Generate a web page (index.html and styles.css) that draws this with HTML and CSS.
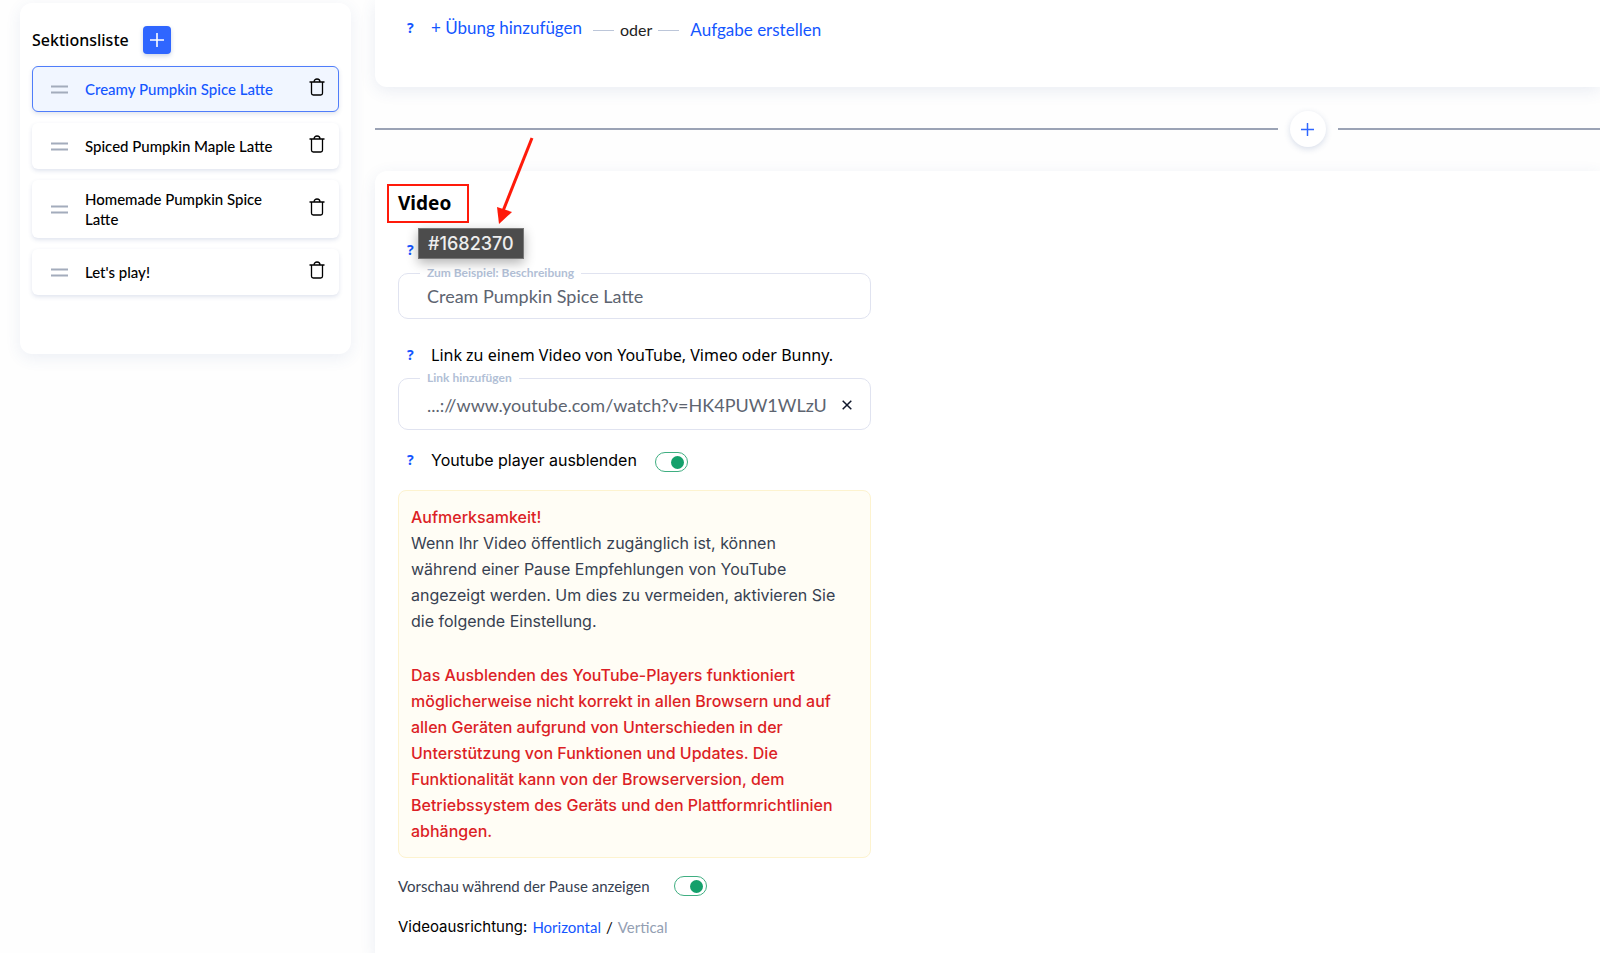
FILE: index.html
```html
<!DOCTYPE html>
<html lang="de">
<head>
  <meta charset="UTF-8" />
  <meta name="viewport" content="width=device-width, initial-scale=1.0"/>
  <title>Sektionsliste</title>
  <link rel="stylesheet" href="styles.css">
</head>
<body>
  <!-- Shared icons -->
  <svg class="sprite" aria-hidden="true">
    <symbol id="trash" viewBox="0 0 16 18">
      <path d="M.5 4h15M2.500 4v11.200a1.800 1.800 0 0 0 1.800 1.800h7.400a1.800 1.800 0 0 0 1.800-1.800V4M5 4c0-4 6-4 6 0" fill="none" stroke="currentColor" stroke-width="1.300"/>
    </symbol>
    <symbol id="drag" viewBox="0 0 17 9">
      <path d="M0 1.500h17M0 7.500h17" stroke="currentColor" stroke-width="2"/>
    </symbol>
    <symbol id="plus" viewBox="0 0 14 14">
      <path d="M7 .5v13M.5 7h13" fill="none" stroke="currentColor" stroke-width="1.600" stroke-linecap="round"/>
    </symbol>
  </svg>

  <div class="page">
    <aside class="sidebar">
      <div class="sidebar-head">
        <h2>Sektionsliste</h2>
        <button class="add-btn" aria-label="Sektion hinzufügen"><svg><use href="#plus"/></svg></button>
      </div>
      <ul class="sections">
        <li class="item active">
          <svg class="drag"><use href="#drag"/></svg>
          <a href="#">Creamy Pumpkin Spice Latte</a>
          <button class="trash" aria-label="Löschen"><svg><use href="#trash"/></svg></button>
        </li>
        <li class="item">
          <svg class="drag"><use href="#drag"/></svg>
          <a href="#">Spiced Pumpkin Maple Latte</a>
          <button class="trash" aria-label="Löschen"><svg><use href="#trash"/></svg></button>
        </li>
        <li class="item">
          <svg class="drag"><use href="#drag"/></svg>
          <a href="#">Homemade Pumpkin Spice Latte</a>
          <button class="trash" aria-label="Löschen"><svg><use href="#trash"/></svg></button>
        </li>
        <li class="item">
          <svg class="drag"><use href="#drag"/></svg>
          <a href="#">Let's play!</a>
          <button class="trash" aria-label="Löschen"><svg><use href="#trash"/></svg></button>
        </li>
      </ul>
    </aside>

    <main class="content">
      <section class="card card-top">
        <div class="lead">
          <button class="help">?</button>
          <a href="#">+ Übung hinzufügen</a>
        </div>
        <span class="or">oder</span>
        <a href="#">Aufgabe erstellen</a>
      </section>

      <div class="divider">
        <button class="round-add" aria-label="Block hinzufügen"><svg><use href="#plus"/></svg></button>
      </div>

      <section class="card card-video">
        <h1>Video</h1>

        <div class="row">
          <button class="help">?</button>
        </div>
        <fieldset class="field">
          <legend><label for="desc">Zum Beispiel: Beschreibung</label></legend>
          <input id="desc" type="text" value="Cream Pumpkin Spice Latte">
        </fieldset>

        <div class="row row-link">
          <button class="help">?</button>
          <span class="row-title">Link zu einem Video von YouTube, Vimeo oder Bunny.</span>
        </div>
        <fieldset class="field field-link">
          <legend><label for="link">Link hinzufügen</label></legend>
          <input id="link" type="text" value="...://www.youtube.com/watch?v=HK4PUW1WLzU">
          <button class="clear" aria-label="Leeren">
            <svg viewBox="0 0 10 10"><path d="M.7.7l8.600 8.600M9.300.7L.7 9.300" stroke="currentColor" stroke-width="1.500"/></svg>
          </button>
        </fieldset>

        <div class="row row-player">
          <button class="help">?</button>
          <label for="hide">Youtube player ausblenden</label>
          <input id="hide" class="switch" type="checkbox" checked>
        </div>

        <div class="notice">
          <strong>Aufmerksamkeit!</strong>
          <p>Wenn Ihr Video öffentlich zugänglich ist, können während einer Pause Empfehlungen von YouTube angezeigt werden. Um dies zu vermeiden, aktivieren Sie die folgende Einstellung.</p>
          <strong>Das Ausblenden des YouTube-Players funktioniert möglicherweise nicht korrekt in allen Browsern und auf allen Geräten aufgrund von Unterschieden in der Unterstützung von Funktionen und Updates. Die Funktionalität kann von der Browserversion, dem Betriebssystem des Geräts und den Plattformrichtlinien abhängen.</strong>
        </div>

        <div class="preview">
          <label for="preview">Vorschau während der Pause anzeigen</label>
          <input id="preview" class="switch" type="checkbox" checked>
        </div>

        <div class="orientation">
          <span class="orientation-title">Videoausrichtung:</span>
          <a href="#">Horizontal</a>
          <span>/</span>
          <a href="#" class="muted">Vertical</a>
        </div>

        <!-- Marker, arrow and id tooltip over the heading -->
        <div class="marker"></div>
        <svg class="arrow" viewBox="0 0 50 92">
          <path d="M44 3L15 76" stroke="#ff1a0a" stroke-width="3"/>
          <path d="M9 72l15 5L11 89z" fill="#ff1a0a"/>
        </svg>
        <div class="tooltip">#1682370</div>
      </section>
    </main>
  </div>
</body>
</html>
```
FILE: styles.css
```css
* {
  margin: 0;
  padding: 0;
  box-sizing: border-box;
}

body {
  background: #fefefe;
  color: #000;
  font-family: Lato, sans-serif;
  font-size: 16px;
  overflow: hidden;
}

button {
  border: 0;
  background: none;
  cursor: pointer;
}

a {
  color: #1456ff;
  text-decoration: none;
}

.sprite {
  display: none;
}

.page {
  display: flex;
  align-items: flex-start;
  gap: 24px;
  padding-left: 20px;
  height: 100vh;
}

/* Sidebar */
.sidebar {
  flex: 0 0 331px;
  margin-top: 3px;
  padding: 23px 12px 59px;
  border-radius: 12px;
  background: #fff;
  box-shadow: 0 4px 16px rgba(60, 90, 150, 0.09);
}

.sidebar-head {
  display: flex;
  align-items: center;
  gap: 14px;
  margin-bottom: 12px;
}

.sidebar-head h2 {
  font: 500 16px/28px "Noto Sans", sans-serif;
}

.add-btn {
  display: flex;
  align-items: center;
  justify-content: center;
  width: 28px;
  height: 28px;
  border-radius: 4px;
  background: #2f66ff;
  color: #fff;
  box-shadow: 0 2px 4px rgba(60, 90, 150, 0.25);
}

.add-btn svg {
  width: 14px;
  height: 14px;
}

.sections {
  display: flex;
  flex-direction: column;
  gap: 11px;
  list-style: none;
}

.item {
  display: flex;
  align-items: center;
  gap: 17px;
  min-height: 46px;
  padding: 8px 13px 8px 18px;
  border: 1px solid transparent;
  border-radius: 6px;
  background: #fff;
  box-shadow: 0 2px 4px rgba(60, 90, 150, 0.16);
}

.item a {
  flex: 1;
  color: #000;
  font-size: 15px;
  font-weight: 500;
  line-height: 20px;
}

.item.active {
  border-color: #4f7dfa;
  background: #f1f6ff;
}

.item.active a {
  color: #1456ff;
}

.drag {
  width: 17px;
  height: 9px;
  color: #a3acbc;
}

.trash {
  height: 18px;
  margin-bottom: 4px;
}

.trash svg {
  display: block;
  width: 16px;
  height: 18px;
}

/* Content */
.content {
  display: flex;
  flex: 1;
  flex-direction: column;
  min-width: 0;
  height: 100%;
}

.card {
  background: #fff;
  box-shadow: 0 4px 16px rgba(60, 90, 150, 0.1);
}

.card-top {
  display: flex;
  align-items: center;
  padding: 16px 24px 43px 32px;
  border-bottom-left-radius: 12px;
  font-size: 17px;
  line-height: 24px;
}

.lead {
  display: flex;
  padding-bottom: 4px;
}

.help {
  width: 24px;
  color: #1456ff;
  font: 700 14px/24px "Noto Sans", sans-serif;
  text-align: left;
}

.or {
  display: flex;
  align-items: center;
  gap: 6px;
  margin: 0 11px;
  color: #222;
  font-size: 16px;
}

.or::before,
.or::after {
  content: '';
  width: 21px;
  height: 1px;
  background: #bcc6d9;
}

.divider {
  display: flex;
  align-items: center;
  gap: 12px;
  padding: 24px 0;
}

.divider::before,
.divider::after {
  content: '';
  flex: 31;
  height: 2px;
  background: #9ba3b5;
}

.divider::after {
  flex: 9;
}

.round-add {
  display: flex;
  align-items: center;
  justify-content: center;
  width: 36px;
  height: 36px;
  border-radius: 50%;
  background: #fff;
  color: #2f66ff;
  box-shadow: 0 2px 6px rgba(60, 90, 150, 0.2);
}

.round-add svg {
  width: 13px;
  height: 13px;
  stroke-width: 2px;
}

.card-video {
  position: relative;
  flex: 1;
  padding: 18px 23px;
  border-top-left-radius: 12px;
}

.card-video h1 {
  margin-bottom: 21px;
  font: 700 19px/28px "Noto Sans", sans-serif;
}

.row {
  display: flex;
  align-items: center;
  height: 24px;
  padding-left: 9px;
}

.row-link {
  margin-top: 24px;
}

.row-title {
  font: 16px/24px "Noto Sans", sans-serif;
}

.row-player {
  margin-top: 18px;
  font-family: Inter, sans-serif;
}

.row-player .switch {
  margin: 4px 0 0 18px;
}

.field {
  display: flex;
  align-items: center;
  max-width: 473px;
  margin-top: 4px;
  padding: 0 16px 0 21px;
  border: 1px solid #e0e3f0;
  border-radius: 10px;
}

.field legend {
  padding: 0 7px;
  color: #b2bfd6;
  font-size: 12px;
  font-weight: 700;
  line-height: 14px;
}

.field input {
  flex: 1;
  min-width: 0;
  height: 38px;
  padding-left: 7px;
  padding-bottom: 6px;
  border: 0;
  background: none;
  color: #5d6470;
  font: 18px Lato, sans-serif;
}

.field-link input {
  height: 44px;
  padding-bottom: 4px;
}

.clear {
  padding: 0 2px 4px;
  color: #10182c;
}

.clear svg {
  display: block;
  width: 10px;
  height: 10px;
}

/* Switch */
.switch {
  appearance: none;
  display: flex;
  align-items: center;
  justify-content: flex-end;
  width: 33px;
  height: 20px;
  padding-right: 3px;
  border: 1px solid #3fae81;
  border-radius: 10px;
  background: #fff;
}

.switch::before {
  content: '';
  width: 13px;
  height: 13px;
  border-radius: 50%;
  background: #14a06b;
}

.switch:not(:checked) {
  justify-content: flex-start;
}

.notice {
  max-width: 473px;
  margin-top: 18px;
  padding: 13px 28px 13px 12px;
  border: 1px solid #fdf3cf;
  border-radius: 8px;
  background: #fffdf5;
  color: #374151;
  font: 16px/26px Inter, sans-serif;
}

.notice strong {
  display: block;
  color: #dc1f26;
  font-weight: 500;
}

.notice p {
  margin-bottom: 28px;
}

.preview {
  display: flex;
  align-items: center;
  gap: 24px;
  margin-top: 18px;
  color: #374151;
  font-size: 15px;
}

.orientation {
  display: flex;
  gap: 5px;
  margin-top: 20px;
  font-size: 15px;
  line-height: 22px;
}

.orientation-title {
  font-family: Inter, sans-serif;
}

.orientation .muted {
  color: #94a0b3;
}

/* Overlay */
.marker {
  position: absolute;
  top: 13px;
  left: 12px;
  width: 82px;
  height: 39px;
  border: 2px solid #ff1a0a;
}

.arrow {
  position: absolute;
  top: -36px;
  left: 113px;
  width: 50px;
  height: 92px;
}

.tooltip {
  position: absolute;
  top: 57px;
  left: 43px;
  padding: 0 9px;
  border: 1px solid #777;
  background: #4c4c4c;
  color: #eee;
  font: 500 18px/29px Inter, sans-serif;
  box-shadow: 0 4px 12px rgba(0, 0, 0, 0.3);
}
```
